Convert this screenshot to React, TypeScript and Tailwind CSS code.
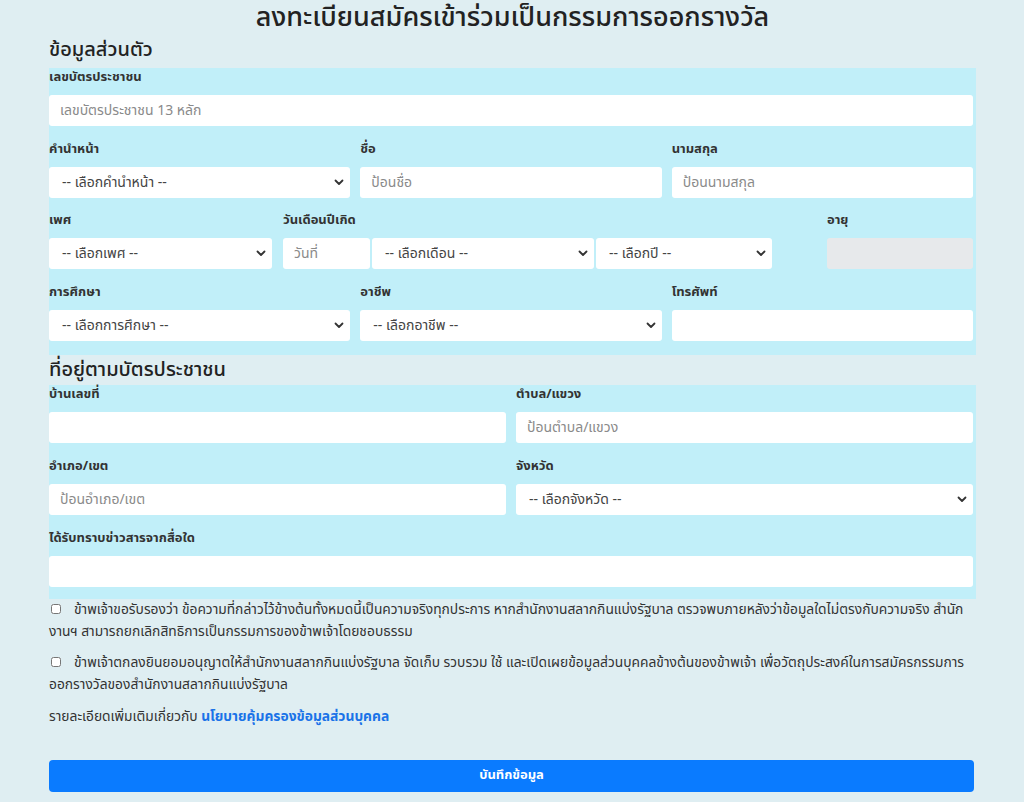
import React from "react";

const FONT = { fontFamily: '"Noto Sans Thai", Tahoma, "Noto Sans", "DejaVu Sans", sans-serif' };

function Label({ children }: { children: React.ReactNode }) {
  return <label className="block h-[17px] text-[13px] font-bold leading-[17px] text-[#333]">{children}</label>;
}

function TextInput({ placeholder, disabled }: { placeholder?: string; disabled?: boolean }) {
  return (
    <input
      placeholder={placeholder}
      disabled={disabled}
      className={
        "block h-[31px] w-full rounded-[3px] px-[11px] text-[14px] text-[#333] outline-none placeholder:text-[#8a8a8a] " +
        (disabled ? "bg-[#e7e9eb]" : "bg-white")
      }
    />
  );
}

function Select({ text }: { text: string }) {
  return (
    <div className="relative h-[31px] w-full rounded-[3px] bg-white">
      <div className="flex h-full items-center px-[13px] text-[14px] text-[#444]">{text}</div>
      <svg className="absolute right-[6px] top-[12px]" width="10" height="7" viewBox="0 0 10 7">
        <path d="M1.5 1.5 L5 5 L8.5 1.5" fill="none" stroke="#333" strokeWidth="1.8" strokeLinecap="round" strokeLinejoin="round" />
      </svg>
    </div>
  );
}

function Field({ label, children, className }: { label: string; children: React.ReactNode; className?: string }) {
  return (
    <div className={className}>
      <Label>{label}</Label>
      <div className="mt-[9px]">{children}</div>
    </div>
  );
}

export default function App() {
  return (
    <div style={FONT} className="min-h-[802px] w-[1024px] bg-[#dfeef2]">
      <div className="mx-auto w-[928px] pl-[1px]">
        <h1 className="h-[36px] text-center text-[27px] font-medium leading-[36px] text-[#222]">
          ลงทะเบียนสมัครเข้าร่วมเป็นกรรมการออกรางวัล
        </h1>
        <h2 className="h-[32px] text-[20px] font-medium leading-[28px] text-[#222]">ข้อมูลส่วนตัว</h2>

        <div className="bg-[#c1eff9] pb-[14px] pr-[3px] pt-[1px]">
          <Field label="เลขบัตรประชาชน">
            <TextInput placeholder="เลขบัตรประชาชน 13 หลัก" />
          </Field>

          <div className="mt-[15px] grid grid-cols-3 gap-x-[10px]">
            <Field label="คำนำหน้า">
              <Select text="-- เลือกคำนำหน้า --" />
            </Field>
            <Field label="ชื่อ">
              <TextInput placeholder="ป้อนชื่อ" />
            </Field>
            <Field label="นามสกุล">
              <TextInput placeholder="ป้อนนามสกุล" />
            </Field>
          </div>

          <div className="mt-[14px] grid grid-cols-[223px_490px_146px] gap-x-[11px]">
            <Field label="เพศ">
              <Select text="-- เลือกเพศ --" />
            </Field>
            <Field label="วันเดือนปีเกิด">
              <div className="grid grid-cols-[87px_222px_176px] gap-x-[2px]">
                <TextInput placeholder="วันที่" />
                <Select text="-- เลือกเดือน --" />
                <Select text="-- เลือกปี --" />
              </div>
            </Field>
            <Field label="อายุ" className="ml-[43px] w-[146px]">
              <TextInput disabled />
            </Field>
          </div>

          <div className="mt-[15px] grid grid-cols-3 gap-x-[10px]">
            <Field label="การศึกษา">
              <Select text="-- เลือกการศึกษา --" />
            </Field>
            <Field label="อาชีพ">
              <Select text="-- เลือกอาชีพ --" />
            </Field>
            <Field label="โทรศัพท์">
              <TextInput />
            </Field>
          </div>
        </div>

        <h2 className="h-[30px] pt-[1px] text-[20px] font-medium leading-[28px] text-[#222]">ที่อยู่ตามบัตรประชาชน</h2>

        <div className="bg-[#c1eff9] pb-[12px] pr-[3px] pt-[1px]">
          <div className="grid grid-cols-2 gap-x-[10px]">
            <Field label="บ้านเลขที่">
              <TextInput />
            </Field>
            <Field label="ตำบล/แขวง">
              <TextInput placeholder="ป้อนตำบล/แขวง" />
            </Field>
          </div>
          <div className="mt-[15px] grid grid-cols-2 gap-x-[10px]">
            <Field label="อำเภอ/เขต">
              <TextInput placeholder="ป้อนอำเภอ/เขต" />
            </Field>
            <Field label="จังหวัด">
              <Select text="-- เลือกจังหวัด --" />
            </Field>
          </div>
          <Field label="ได้รับทราบข่าวสารจากสื่อใด" className="mt-[15px]">
            <TextInput />
          </Field>
        </div>

        <div className="pr-[3px] text-[13.8px] leading-[22px] text-[#333]">
          <div>
            <input type="checkbox" className="ml-[2px] mr-[13px] h-[10px] w-[10px] align-[0px]" />
            ข้าพเจ้าขอรับรองว่า ข้อความที่กล่าวไว้ข้างต้นทั้งหมดนี้เป็นความจริงทุกประการ หากสำนักงานสลากกินแบ่งรัฐบาล ตรวจพบภายหลังว่าข้อมูลใดไม่ตรงกับความจริง สำนักงานฯ สามารถยกเลิกสิทธิการเป็นกรรมการของข้าพเจ้าโดยชอบธรรม
          </div>
          <div className="mt-[9px]">
            <input type="checkbox" className="ml-[2px] mr-[13px] h-[10px] w-[10px] align-[0px]" />
            ข้าพเจ้าตกลงยินยอมอนุญาตให้สำนักงานสลากกินแบ่งรัฐบาล จัดเก็บ รวบรวม ใช้ และเปิดเผยข้อมูลส่วนบุคคลข้างต้นของข้าพเจ้า เพื่อวัตถุประสงค์ในการสมัครกรรมการออกรางวัลของสำนักงานสลากกินแบ่งรัฐบาล
          </div>
          <div className="mt-[10px]">
            รายละเอียดเพิ่มเติมเกี่ยวกับ <a className="font-bold text-[#1a73e8]">นโยบายคุ้มครองข้อมูลส่วนบุคคล</a>
          </div>
        </div>

        <button className="mt-[32px] h-[32px] w-[925px] rounded-[4px] bg-[#0a7bff] text-[13px] font-bold text-white">
          บันทึกข้อมูล
        </button>
      </div>
    </div>
  );
}
